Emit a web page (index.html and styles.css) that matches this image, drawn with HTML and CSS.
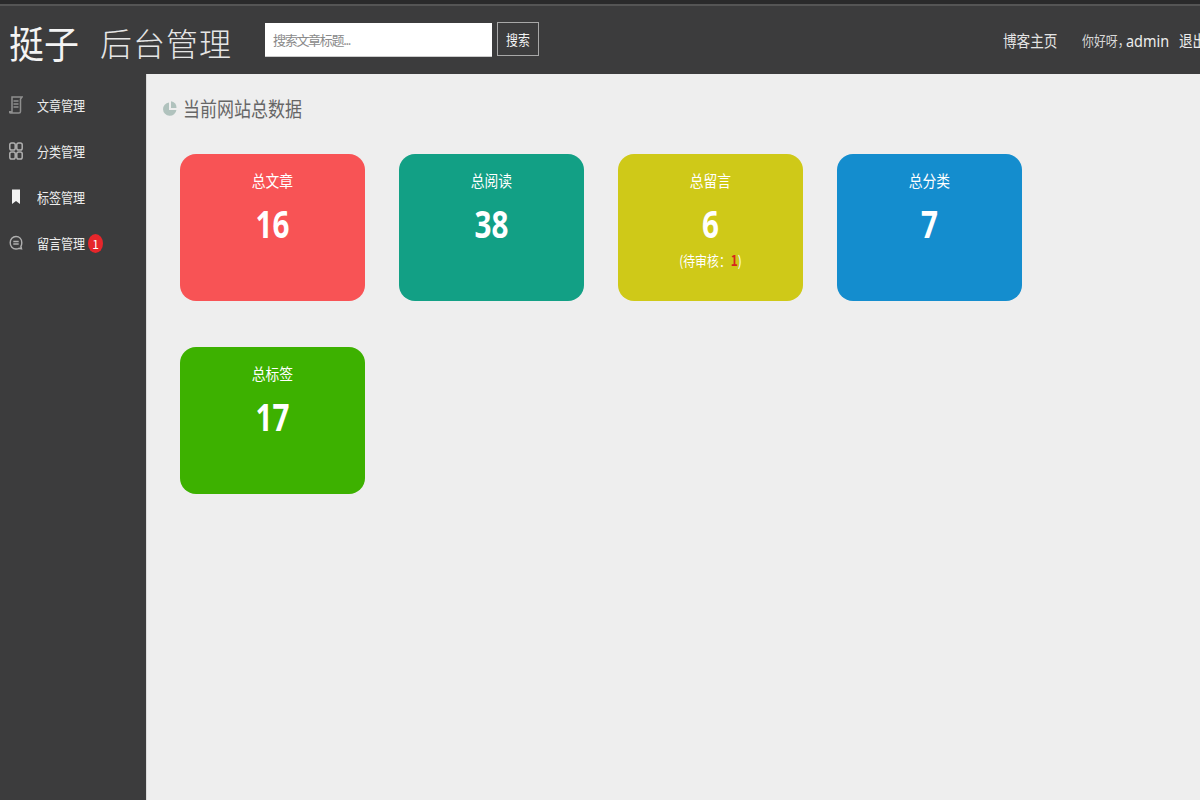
FILE: index.html
```html
<!DOCTYPE html>
<html lang="zh-CN">
<head>
<meta charset="utf-8">
<title>后台管理</title>
<link rel="stylesheet" href="styles.css">
</head>
<body>
<div class="page">
  <header class="topbar">
    <div class="logo"><span class="logo-main">挺子</span><span class="logo-sub">后台管理</span></div>
    <form class="search">
      <input class="search-input" type="text" placeholder="搜索文章标题...">
      <button class="search-btn" type="button"><span class="squeeze">搜索</span></button>
    </form>
    <nav class="usernav">
      <a class="home"><span class="squeeze">博客主页</span></a>
      <span class="hello"><span class="squeeze">你好呀，</span></span>
      <span class="admin"><span class="squeeze">admin</span></span>
      <a class="logout"><span class="squeeze">退出</span></a>
    </nav>
  </header>
  <div class="body">
    <aside class="sidebar">
      <a class="item">
        <svg class="icon" viewBox="0 0 14 18" fill="none" stroke="#8f8f8f"><path d="M3 1h10l-1.500 2v12.500c0 1-.7 1.500-1.500 1.500H1.500c-.8 0-1-.7-1-1.300h2.500zM4.500 5h5M4.500 8h5M4.500 11h5" stroke-width="1.500"/></svg>
        <span class="name">文章管理</span>
      </a>
      <a class="item">
        <svg class="icon" viewBox="0 0 14 18" fill="none" stroke="#b0b0b0" stroke-width="1.500"><rect x=".8" y="1" width="5.400" height="7" rx="1.800"/><rect x="7.800" y="1" width="5.400" height="7" rx="1.800"/><rect x=".8" y="10" width="5.400" height="7" rx="1.800"/><rect x="7.800" y="10" width="5.400" height="7" rx="1.800"/></svg>
        <span class="name">分类管理</span>
      </a>
      <a class="item">
        <svg class="icon" viewBox="0 0 14 18"><path d="M3 1.500h8V16L7 13l-4 3z" fill="#f2f2f2"/></svg>
        <span class="name">标签管理</span>
      </a>
      <a class="item">
        <svg class="icon" viewBox="0 0 14 18" fill="none" stroke="#b0b0b0" stroke-width="1.400"><path d="M7 2.500c3.400 0 5.800 2.600 5.800 6.200 0 1.300-.3 2.600-.9 3.700l.6 2.400-2.500-.5c-.9.500-1.900.7-3 .7-3.400 0-5.800-2.700-5.800-6.300S3.600 2.500 7 2.500zM4.300 7.500h5.400M4.300 10h5.400"/></svg>
        <span class="name">留言管理</span>
        <b class="badge">1</b>
      </a>
    </aside>
    <main class="main">
      <h2 class="title">
        <svg class="pie" viewBox="0 0 14 18"><path d="M6 3.500v7.500h7.400A6.700 6.700 0 1 1 6 3.500z" fill="#b0c2bd"/><path d="M8 2.200a6 6 0 0 1 5.400 6.800H8z" fill="#b0c2bd"/></svg>
        <span class="title-text">当前网站总数据</span>
      </h2>
      <div class="cards">
        <section class="card red"><div class="label">总文章</div><div class="num">16</div></section>
        <section class="card teal"><div class="label">总阅读</div><div class="num">38</div></section>
        <section class="card yellow"><div class="label">总留言</div><div class="num">6</div><div class="note">(待审核：<em>1</em>)</div></section>
        <section class="card blue"><div class="label">总分类</div><div class="num">7</div></section>
        <section class="card green"><div class="label">总标签</div><div class="num">17</div></section>
      </div>
    </main>
  </div>
</div>
</body>
</html>
```
FILE: styles.css
```css
* { box-sizing: border-box; }
html, body { margin: 0; height: 100%; }
body {
  font-family: "Noto Sans CJK SC", "Noto Sans", sans-serif;
  background: #3c3c3d;
  overflow: hidden;
}
.squeeze { display: inline-block; white-space: nowrap; transform: scaleX(.85); transform-origin: left center; }
.page { display: flex; flex-direction: column; height: 800px; }
.topbar {
  height: 74px;
  flex: none;
  display: flex;
  align-items: center;
  background: #3c3c3d;
  border-top: 4px solid #2a2a2b;
  box-shadow: inset 0 2px 0 #555;
  color: #e8e8e8;
  padding: 0 0 0 9px;
}
.logo { width: 256px; display: flex; align-items: center; color: #f4f4f4; white-space: nowrap; position: relative; top: 3px; }
.logo-main { font-size: 38px; line-height: 44px; font-weight: 400; width: 91px; transform: scaleX(.92); transform-origin: left center; }
.logo-sub { font-size: 32px; line-height: 44px; font-weight: 300; letter-spacing: 1px; color: #e6e6e6; }
.search { display: flex; align-items: flex-start; gap: 5px; }
.search-input {
  width: 227px; height: 34px; margin-top: 1px; border: 0; border-bottom: 1px solid #ccc; background: #fff;
  padding: 0 8px; font: 13px "Noto Sans CJK SC", sans-serif; letter-spacing: -1.300px; color: #333; border-radius: 0; outline: none;
}
.search-input::placeholder { color: #8a8a8a; opacity: 1; }
.search-btn {
  width: 42px; height: 34px; padding: 0 0 0 8px; background: #3c3c3d; border: 1px solid #a8a8a8; color: #f2f2f2;
  font: 14px "Noto Sans CJK SC", sans-serif; text-align: left; overflow: hidden;
}
.usernav { margin-left: auto; display: flex; align-items: center; white-space: nowrap; width: 197px; overflow: hidden; position: relative; top: 1px; }
.home { font-size: 16px; width: 79px; flex: none; color: #e4e4e4; }
.hello { font-size: 14px; width: 44px; flex: none; color: #d8d8d8; }
.admin { font-size: 17px; font-family: "Noto Sans", sans-serif; width: 53px; flex: none; color: #ececec; }
.logout { font-size: 16px; width: 30px; flex: none; color: #ececec; }
.body { flex: 1; display: flex; min-height: 0; }
.sidebar { width: 146px; flex: none; padding-top: 8px; background: #3c3c3d; }
.item { height: 46px; display: flex; align-items: center; padding-left: 9px; font-size: 14px; color: #ececec; }
.name { width: 48px; margin-left: 14px; white-space: nowrap; transform: scaleX(.86); transform-origin: left center; }
.icon { width: 14px; height: 18px; flex: none; }
.badge {
  width: 15px; height: 19px; margin-left: 3px; border-radius: 50%;
  display: flex; align-items: center; justify-content: center;
  background: #e6262b; color: #fff; font-size: 12px; font-weight: 400;
}
.main { flex: 1; background: #eee; border-left: 1px solid #d9d9d9; padding: 18px 0 0 16px; }
.title { margin: 0; height: 32px; display: flex; align-items: center; font-size: 20px; font-weight: 400; color: #666; }
.pie { width: 14px; height: 18px; margin-right: 6px; flex: none; }
.title-text { white-space: nowrap; transform: scaleX(.85); transform-origin: left center; }
.cards { display: flex; flex-wrap: wrap; gap: 46px 34px; padding: 30px 0 0 17px; width: 880px; }
.card { width: 185px; height: 147px; border-radius: 16px; color: #fff; text-align: center; padding-top: 14px; }
.label { font-size: 16px; line-height: 24px; transform: scaleX(.86); }
.num { font-family: "Open Sans", "Noto Sans", sans-serif; font-size: 38px; line-height: 44px; font-weight: 700; margin-top: 9px; transform: scaleX(.78); }
.note { font-size: 14px; line-height: 18px; margin-top: 6px; transform: scaleX(.85); white-space: nowrap; }
.note em { font-style: normal; font-weight: 700; color: #d7261e; }
.red { background: #f85355; }
.teal { background: #12a085; }
.yellow { background: #cfc918; }
.blue { background: #148dce; }
.green { background: #3db100; }
```
